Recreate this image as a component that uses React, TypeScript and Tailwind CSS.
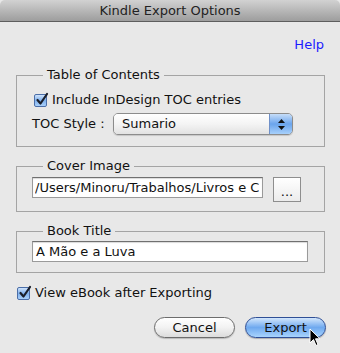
import React from 'react';

function Check() {
  return (
    <span className="relative inline-flex h-[13px] w-[13px] shrink-0 rounded-[2px] border border-[#4b6ea8] bg-gradient-to-b from-[#cfe3fb] via-[#7fb0ec] to-[#a9d0fa]">
      <svg viewBox="0 0 14 14" className="absolute -top-[3px] left-[0px] h-[15px] w-[14px]">
        <path d="M2.5 7.5 L5.5 11 L12 1.5" fill="none" stroke="#1a1f2b" strokeWidth="2.2" strokeLinecap="round" strokeLinejoin="round" />
      </svg>
    </span>
  );
}

function Legend({ children }: { children: React.ReactNode }) {
  return <legend className="ml-[11px] px-1 leading-[16px]">{children}</legend>;
}

export default function App() {
  return (
    <div
      className="relative h-[353px] w-[340px] overflow-hidden bg-[#e8e8e8] text-[13px] text-[#111]"
      style={{ fontFamily: '"DejaVu Sans", "Noto Sans", sans-serif' }}
    >
      {/* Title bar */}
      <div className="flex h-[22px] items-center justify-center rounded-t-[5px] border-b border-[#5e5e5e] bg-gradient-to-b from-[#d2d2d2] to-[#9d9d9d] text-[#222]">
        Kindle Export Options
      </div>

      <div className="flex justify-end pr-4 pt-[15px] leading-[16px]">
        <span className="text-[#1a1aff]">Help</span>
      </div>

      {/* Table of Contents */}
      <fieldset className="mx-4 mt-[14px] w-[309px] border border-[#a4a4a4] pb-[11px] pl-[15px]">
        <Legend>Table of Contents</Legend>
        <div className="ml-[2px] mt-[9px] flex h-[16px] items-center gap-[5px]">
          <Check />
          <span>Include InDesign TOC entries</span>
        </div>
        <div className="mt-[5px] flex items-center">
          <span className="w-[81px]">TOC Style :</span>
          <div className="flex h-[22px] w-[180px] overflow-hidden rounded-[5px] border border-[#8c8c8c] shadow-[0_1px_1px_rgba(0,0,0,0.15)]">
            <div className="flex flex-1 items-center bg-gradient-to-b from-[#ffffff] via-[#f4f4f4] to-[#e2e2e2] pl-[8px]">
              Sumario
            </div>
            <div className="flex w-[23px] flex-col items-center justify-center gap-[3px] border-l border-[#6f90c8] bg-gradient-to-b from-[#c6ddf8] via-[#6aa4ec] to-[#a7d0fb]">
              <svg viewBox="0 0 7 4" className="h-[4px] w-[7px]"><path d="M3.5 0 L7 4 L0 4Z" fill="#111" /></svg>
              <svg viewBox="0 0 7 4" className="h-[4px] w-[7px]"><path d="M0 0 L7 0 L3.5 4Z" fill="#111" /></svg>
            </div>
          </div>
        </div>
      </fieldset>

      {/* Cover Image */}
      <fieldset className="mx-4 mt-[11px] w-[309px] border border-[#a4a4a4] pb-[9px] pl-[15px]">
        <Legend>Cover Image</Legend>
        <div className="mt-[3px] flex items-start gap-[10px]">
          <div className="flex h-[21px] w-[231px] items-center overflow-hidden whitespace-nowrap border border-[#9a9a9a] border-t-[#707070] bg-white pl-[2px] shadow-[inset_0_1px_1px_rgba(0,0,0,0.15)]">
            <span className="truncate">/Users/Minoru/Trabalhos/Livros e C</span>
          </div>
          <div className="flex h-[25px] w-[28px] items-end justify-center border border-[#8e8e8e] bg-gradient-to-b from-[#ffffff] to-[#ececec] pb-[3px] leading-[12px]">
            ...
          </div>
        </div>
      </fieldset>

      {/* Book Title */}
      <fieldset className="mx-4 mt-[11px] w-[309px] border border-[#a4a4a4] pb-[10px] pl-[15px]">
        <Legend>Book Title</Legend>
        <div className="mt-[2px] flex h-[21px] w-[276px] items-center border border-[#9a9a9a] border-t-[#707070] bg-white pl-[3px] shadow-[inset_0_1px_1px_rgba(0,0,0,0.15)]">
          A Mão e a Luva
        </div>
      </fieldset>

      <div className="ml-[17px] mt-[12px] flex h-[16px] items-center gap-[5px]">
        <Check />
        <span>View eBook after Exporting</span>
      </div>

      <div className="mr-[14px] mt-[16px] flex justify-end gap-[10px]">
        <button className="flex h-[21px] w-[81px] items-center justify-center rounded-full border border-[#6d6d6d] bg-gradient-to-b from-[#ffffff] via-[#f2f2f2] to-[#dcdcdc] shadow-[0_1px_1px_rgba(0,0,0,0.2)]">
          Cancel
        </button>
        <button className="flex h-[21px] w-[81px] items-center justify-center rounded-full border border-[#2f4f96] bg-gradient-to-b from-[#d3e6fb] via-[#6fa9ef] to-[#a8d4fd] shadow-[0_1px_1px_rgba(0,0,0,0.25)]">
          Export
        </button>
      </div>

      {/* mouse cursor */}
      <svg viewBox="0 0 12 19" className="absolute left-[309px] top-[328px] h-[19px] w-[12px]">
        <path d="M1 1 L1 15 L4.5 11.5 L7 17.5 L9 16.5 L6.5 10.8 L11 10.8 Z" fill="#000" stroke="#fff" strokeWidth="1" strokeLinejoin="round" />
      </svg>
    </div>
  );
}
